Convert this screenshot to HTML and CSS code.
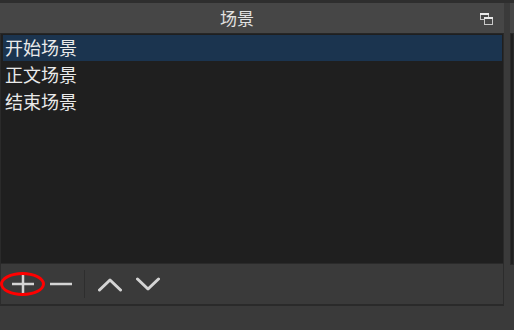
FILE: index.html
```html
<!DOCTYPE html>
<html lang="zh">
<head>
<meta charset="utf-8">
<link rel="stylesheet" href="styles.css">
</head>
<body>
<div class="topstrip"></div>
<div class="workspace">
  <section class="dock">
    <header class="titlebar">
      <span class="title">场景</span>
      <svg class="float-icon" width="14" height="14" viewBox="0 0 14 14">
        <rect x="1.5" y="1.5" width="8" height="6" fill="none" stroke="#c8c8c8" stroke-width="1"/>
        <rect x="1" y="1" width="9" height="2" fill="#e8e8e8"/>
        <rect x="5.5" y="5.5" width="8" height="7" fill="#464646" stroke="#c8c8c8" stroke-width="1"/>
        <rect x="5" y="5" width="9" height="2" fill="#e8e8e8"/>
      </svg>
    </header>
    <ul class="list">
      <li class="item selected">开始场景</li>
      <li class="item">正文场景</li>
      <li class="item">结束场景</li>
    </ul>
    <footer class="toolbar">
      <button class="tool add">
        <svg width="24" height="24" viewBox="0 0 24 24"><path d="M12 1v22M1 12h22" stroke="#d4d4d4" stroke-width="2.5" fill="none"/></svg>
        <span class="ring"></span>
      </button>
      <button class="tool">
        <svg width="24" height="24" viewBox="0 0 24 24"><path d="M1 12h22" stroke="#d4d4d4" stroke-width="2.5" fill="none"/></svg>
      </button>
      <span class="sep"></span>
      <button class="tool">
        <svg width="24" height="24" viewBox="0 0 24 24"><path d="M1.5 18l10.5-10 10.5 10" stroke="#d4d4d4" stroke-width="3" fill="none" stroke-linecap="round" stroke-linejoin="round"/></svg>
      </button>
      <button class="tool">
        <svg width="24" height="24" viewBox="0 0 24 24"><path d="M1.5 7l10.5 10 10.5-10" stroke="#d4d4d4" stroke-width="3" fill="none" stroke-linecap="round" stroke-linejoin="round"/></svg>
      </button>
    </footer>
  </section>
  <div class="next-dock">
    <div class="next-title"></div>
    <div class="next-list"></div>
  </div>
</div>
</body>
</html>
```
FILE: styles.css
```css
* { box-sizing: border-box; }
html, body { margin: 0; padding: 0; }
body {
  width: 514px;
  height: 330px;
  overflow: hidden;
  background: #3a3a3a;
  font-family: "Noto Sans CJK SC", "Noto Sans", sans-serif;
  color: #e6e6e6;
}
.topstrip { height: 3px; background: #2e2e2e; }
.workspace { display: flex; gap: 6px; }
.dock { width: 504px; flex: none; display: flex; flex-direction: column; }
.titlebar {
  height: 30px;
  background: #464646;
  position: relative;
  display: flex;
  align-items: center;
  justify-content: center;
}
.title { font-size: 17px; line-height: 30px; margin-left: -30px; color: #e2e2e2; }
.float-icon { position: absolute; right: 11px; top: 9px; }
.list {
  list-style: none;
  margin: 0;
  padding: 1px 1px 0 2px;
  height: 231px;
  background: #1f1f1f;
  border: 1px solid #2a2a2a;
  border-top-color: #262626;
}
.item {
  height: 27px;
  line-height: 24px;
  font-size: 18px;
  padding-left: 2px;
  color: #eaeaea;
}
.item.selected { background: #1b344f; height: 26px; margin-bottom: 1px; }
.toolbar {
  height: 42px;
  background: #3a3a3a;
  border-left: 1px solid #2c2c2c;
  border-right: 1px solid #2c2c2c;
  border-bottom: 2px solid #2a2a2a;
  display: flex;
  align-items: center;
  padding-left: 10px;
}
.tool {
  position: relative;
  background: none;
  border: 0;
  padding: 0;
  margin-right: 14px;
  width: 24px;
  height: 28px;
  display: flex;
  align-items: center;
  justify-content: center;
}
.ring {
  position: absolute;
  left: -11px;
  top: 2px;
  width: 45px;
  height: 24px;
  border: 3px solid #f00;
  border-radius: 50%;
}
.sep { width: 1px; height: 28px; background: #2e2e2e; margin: 0 13px 0 -3px; }
.next-dock { flex: 1; display: flex; flex-direction: column; }
.next-title { height: 30px; background: #464646; }
.next-list { height: 232px; background: #1f1f1f; border: 1px solid #2a2a2a; }
```
